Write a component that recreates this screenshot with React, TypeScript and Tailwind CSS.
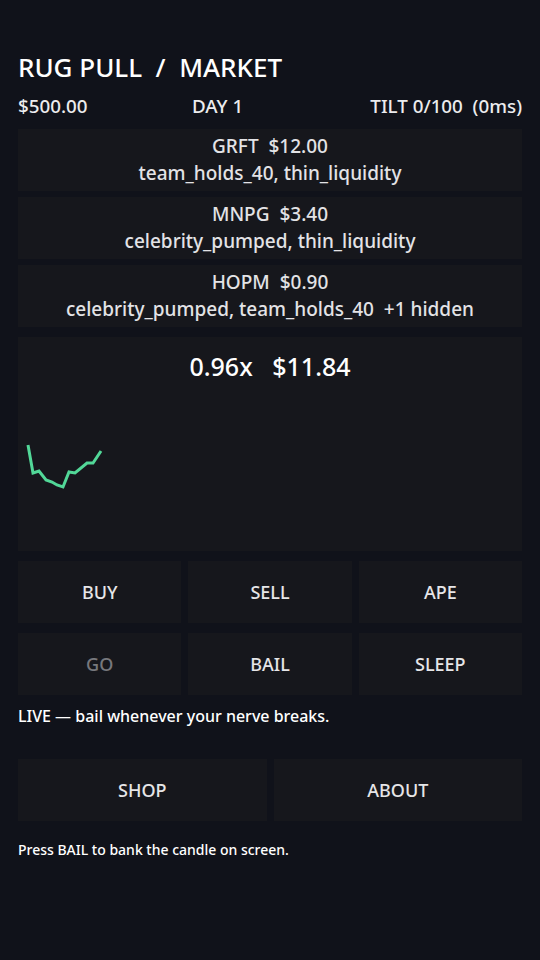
import React from "react";

const stocks = [
  { sym: "GRFT", price: "$12.00", tags: "team_holds_40, thin_liquidity" },
  { sym: "MNPG", price: "$3.40", tags: "celebrity_pumped, thin_liquidity" },
  { sym: "HOPM", price: "$0.90", tags: "celebrity_pumped, team_holds_40  +1 hidden" },
];

const candle = [
  [28, 445], [33, 473], [39, 471], [46, 480], [52, 482], [57, 485], [63, 487],
  [69, 472], [75, 473], [87, 463], [93, 463], [101, 451],
];

function Btn({ label, dim }: { label: string; dim?: boolean }) {
  return (
    <button
      className={
        "h-[62px] bg-[#16171c] flex items-center justify-center text-[18px] font-medium " +
        (dim ? "text-[#77787c]" : "text-[#e6e6e8]")
      }
    >
      {label}
    </button>
  );
}

export default function App() {
  return (
    <div
      className="min-h-[960px] bg-[#10121a] text-[#ececee] px-[18px] pt-[50px]"
      style={{ fontFamily: '"Noto Sans", "Open Sans", sans-serif' }}
    >
      <h1 className="text-[26px] font-medium leading-[34px] whitespace-pre text-white">RUG PULL  /  MARKET</h1>

      <div className="flex text-[18.8px] font-medium leading-[24px] mt-[10px] whitespace-pre">
        <span className="w-[174px]">$500.00</span>
        <span>DAY 1</span>
        <span className="ml-auto">TILT 0/100  (0ms)</span>
      </div>

      <div className="flex flex-col gap-[6px] mt-[11px]">
        {stocks.map(s => (
          <div key={s.sym} className="h-[62px] bg-[#16171c] flex flex-col items-center justify-center text-[19px] font-medium leading-[27px] text-[#e3e3e6] whitespace-pre">
            <span>{s.sym}  {s.price}</span>
            <span>{s.tags}</span>
          </div>
        ))}
      </div>

      <div className="mt-[10px] h-[214px] bg-[#16171c] relative">
        <div className="text-center text-[25px] font-medium leading-[32px] pt-[13px] text-white whitespace-pre">0.96x   $11.84</div>
        <svg className="absolute left-0 top-0" width="504" height="214" viewBox="18 337 504 214">
          <polyline
            points={candle.map(p => p.join(",")).join(" ")}
            fill="none"
            stroke="#52d898"
            strokeWidth="3"
            strokeLinejoin="miter"
          />
        </svg>
      </div>

      <div className="grid grid-cols-3 gap-[7px] mt-[10px]">
        <Btn label="BUY" />
        <Btn label="SELL" />
        <Btn label="APE" />
      </div>
      <div className="grid grid-cols-3 gap-[7px] mt-[10px]">
        <Btn label="GO" dim />
        <Btn label="BAIL" />
        <Btn label="SLEEP" />
      </div>

      <p className="text-[16px] font-medium leading-[22px] mt-[10px] text-white">LIVE — bail whenever your nerve breaks.</p>

      <div className="grid grid-cols-2 gap-[7px] mt-[32px]">
        <Btn label="SHOP" />
        <Btn label="ABOUT" />
      </div>

      <p className="text-[14px] font-medium leading-[20px] mt-[19px] text-white">Press BAIL to bank the candle on screen.</p>
    </div>
  );
}
